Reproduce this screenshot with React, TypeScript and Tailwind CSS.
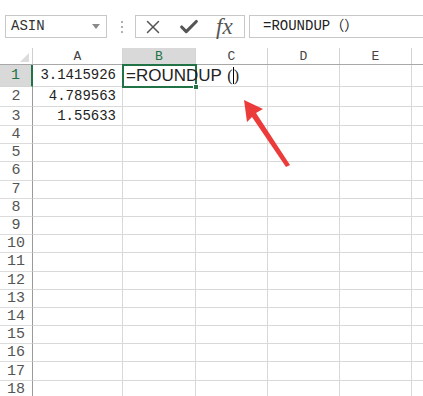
import { X, Check } from "lucide-react";

const cols = [
	{ key: "A", width: 90 },
	{ key: "B", width: 73 },
	{ key: "C", width: 72 },
	{ key: "D", width: 72 },
	{ key: "E", width: 72 },
	{ key: "F", width: 40 },
];

const rowHeights = [22, 20, 19, ...Array(15).fill(18.2)];

const values: Record<number, string> = {
	1: "3.1415926",
	2: "4.789563",
	3: "1.55633",
};

const mono = "font-[family-name:'Liberation_Mono','Noto_Sans_CJK_SC',monospace]";

export default function App() {
	return (
		<div className="relative h-[396px] w-[423px] overflow-hidden bg-white font-[family-name:'Liberation_Sans',sans-serif]">
			{/* formula bar */}
			<div className="flex h-[48px] items-start pt-[15px]">
				<div className="ml-[5px] flex h-[23px] w-[102px] items-center justify-between border border-[#c8c8c8] pl-[5px] pr-[6px]">
					<span className={`${mono} text-[14px] text-[#333]`}>ASIN</span>
					<svg width="8" height="5" viewBox="0 0 8 5">
						<path d="M0 0 L8 0 L4 5 Z" fill="#8a8a8a" />
					</svg>
				</div>
				<div className="ml-[13px] flex h-[23px] w-[4px] flex-col items-center justify-center gap-[3px]">
					<span className="h-[2px] w-[2px] bg-[#b0b0b0]" />
					<span className="h-[2px] w-[2px] bg-[#b0b0b0]" />
					<span className="h-[2px] w-[2px] bg-[#b0b0b0]" />
				</div>
				<div className="ml-[11px] flex h-[23px] w-[110px] items-center border border-[#c8c8c8] pl-[6px]">
					<X size={22} strokeWidth={1.6} className="text-[#555]" />
					<Check size={22} strokeWidth={3.4} className="ml-[14px] text-[#555]" />
					<span className="ml-[16px] font-[family-name:'Liberation_Serif',serif] text-[23px] italic leading-none text-[#555]">
						fx
					</span>
				</div>
				<div className="ml-[4px] flex h-[23px] flex-1 items-center border border-r-0 border-[#c8c8c8] pl-[13px]">
					<span className={`${mono} text-[14px] text-[#222]`}>=ROUNDUP（）</span>
				</div>
			</div>

			{/* column headers */}
			<div className="flex h-[17px] border-b border-[#a8a8a8]">
				<div className="relative w-[33px] shrink-0 border-r border-[#cfcfcf]">
					<svg className="absolute bottom-[2px] right-[3px]" width="9" height="9" viewBox="0 0 9 9">
						<path d="M9 0 L9 9 L0 9 Z" fill="#dcdcdc" />
					</svg>
				</div>
				{cols.map((c) => (
					<div
						key={c.key}
						style={{ width: c.width }}
						className={`flex shrink-0 items-center justify-center border-r border-[#d4d4d4] ${mono} text-[13px] leading-none ${
							c.key === "B" ? "bg-[#d9d9d9] text-[#217346]" : "text-[#444]"
						}`}
					>
						{c.key === "F" ? "" : c.key}
					</div>
				))}
			</div>

			{/* rows */}
			{rowHeights.map((h, i) => {
				const r = i + 1;
				return (
					<div key={r} style={{ height: h }} className="flex">
						<div
							className={`flex w-[33px] shrink-0 items-center justify-center border-b ${mono} text-[15px] leading-none ${
								r === 1
									? "border-r-2 border-b-[#d4d4d4] border-r-[#217346] bg-[#d9d9d9] text-[#217346]"
									: "border-r border-b-[#dcdcdc] border-r-[#9a9a9a] text-[#555]"
							}`}
						>
							{r}
						</div>
						{cols.map((c) => (
							<div
								key={c.key}
								style={{ width: c.width }}
								className="flex shrink-0 items-center border-b border-r border-[#d9d9d9]"
							>
								{c.key === "A" && values[r] && (
									<span className={`ml-auto pr-[6px] ${mono} text-[14px] text-[#222]`}>
										{values[r]}
									</span>
								)}
								{c.key === "B" && r === 1 && (
									<span className="relative z-10 whitespace-nowrap pl-[3px] text-[17px] text-[#222]">
										=ROUNDUP{" "}
										<span className="ml-[1px] font-[family-name:'Liberation_Serif',serif] text-[16px]">(</span>
										<span className="inline-block h-[17px] w-[1px] translate-y-[3px] bg-black" />
										<span className="font-[family-name:'Liberation_Serif',serif] text-[16px]">)</span>
									</span>
								)}
							</div>
						))}
					</div>
				);
			})}

			{/* active cell */}
			<div className="pointer-events-none absolute left-[122px] top-[64px] h-[24px] w-[75px] border-2 border-[#217346]">
				<div className="absolute -bottom-[4px] -right-[4px] h-[6px] w-[6px] border border-white bg-[#217346]" />
			</div>

			{/* red arrow */}
			<svg className="pointer-events-none absolute left-0 top-0" width="423" height="396">
				<path d="M244 100 L263 109 L256 113 L290 165 L286 167 L252 117 L247 122 Z" fill="#ec3b3b" />
			</svg>
		</div>
	);
}
